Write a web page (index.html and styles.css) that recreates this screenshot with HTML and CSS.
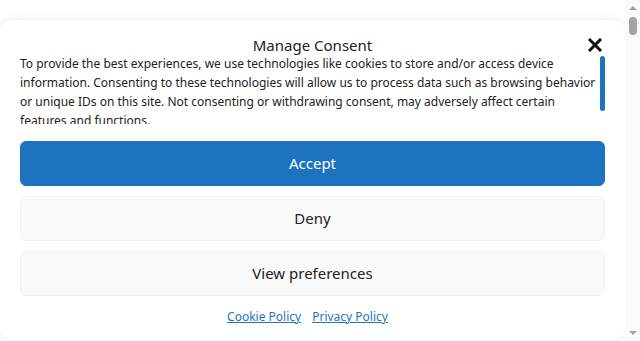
FILE: index.html
```html
<!DOCTYPE html>
<html lang="en">
<head>
    <meta charset="UTF-8">
    <title>Manage Consent</title>
    <meta name="viewport" content="width=device-width, initial-scale=1">
    <link rel="stylesheet" href="styles.css">
</head>
<body>
    <div class="page">
        <div class="cookiebanner">
            <div class="header">
                <div class="title">Manage Consent</div>
                <div class="close" aria-label="close">
                    <svg width="14" height="14" viewBox="0 0 14 14">
                        <path d="M2 2 L12 12 M12 2 L2 12" stroke="#111" stroke-width="3" stroke-linecap="square"/>
                    </svg>
                </div>
            </div>
            <div class="message-row">
                <div class="message">To provide the best experiences, we use technologies like cookies to store and/or access device information. Consenting to these technologies will allow us to process data such as browsing behavior or unique IDs on this site. Not consenting or withdrawing consent, may adversely affect certain features and functions.</div>
                <div class="message-bar"><div class="message-thumb"></div></div>
            </div>
            <div class="buttons">
                <button class="btn accept">Accept</button>
                <button class="btn">Deny</button>
                <button class="btn">View preferences</button>
            </div>
            <div class="links">
                <a href="#">Cookie Policy</a>
                <a href="#">Privacy Policy</a>
            </div>
        </div>
    </div>
    <div class="scrollbar">
        <div class="arrow up"></div>
        <div class="thumb"></div>
        <div class="track"></div>
        <div class="arrow down"></div>
    </div>
</body>
</html>
```

FILE: styles.css
```css
html, body { margin: 0; height: 100%; }
body {
    display: flex;
    height: 341px;
    overflow: hidden;
    font-family: "Noto Sans", "Open Sans", sans-serif;
    color: #222;
    background: #fff;
}
.page { flex: 1; padding-top: 20px; }
.cookiebanner {
    width: 625px;
    height: 320px;
    box-sizing: border-box;
    padding: 15px 20px 0 20px;
    background: #fff;
    border-radius: 12px;
    box-shadow: 0 0 10px rgba(0, 0, 0, 0.08);
}
.header {
    display: flex;
    justify-content: center;
    position: relative;
    height: 20px;
}
.title { font-size: 15px; line-height: 20px; }
.close {
    position: absolute;
    right: 3px;
    top: 3px;
    width: 14px;
    height: 14px;
}
.close svg { display: block; }
.message-row {
    display: flex;
    margin-top: -1px;
}
.message {
    flex: 1;
    height: 70px;
    overflow: hidden;
    font-size: 12px;
    line-height: 19px;
}
.message-bar { width: 5px; padding-top: 2px; }
.message-thumb { height: 55px; background: #1e73be; border-radius: 3px; }
.buttons {
    display: flex;
    flex-direction: column;
    gap: 10px;
    margin-top: 17px;
}
.btn {
    height: 45px;
    padding-bottom: 2px;
    font-family: inherit;
    font-size: 15px;
    color: #222;
    background: #f9f9f9;
    border: 1px solid #f2f2f2;
    border-radius: 6px;
}
.btn.accept { background: #1e73be; border-color: #1e73be; color: #fff; }
.links {
    display: flex;
    justify-content: center;
    gap: 11px;
    margin-top: 11px;
    padding-right: 10px;
    font-size: 12px;
    line-height: 20px;
}
.links a { color: #1e73be; }
.scrollbar {
    width: 15px;
    background: #fafafa;
    display: flex;
    flex-direction: column;
    align-items: center;
}
.arrow { width: 0; height: 0; border-left: 4px solid transparent; border-right: 4px solid transparent; }
.arrow.up { border-bottom: 4px solid #a3a3a3; margin-top: 6px; }
.arrow.down { border-top: 4px solid #a3a3a3; margin-bottom: 6px; }
.thumb { width: 8px; height: 18px; background: #a3a3a3; border-radius: 4px; margin-top: 7px; }
.track { flex: 1; }
```
